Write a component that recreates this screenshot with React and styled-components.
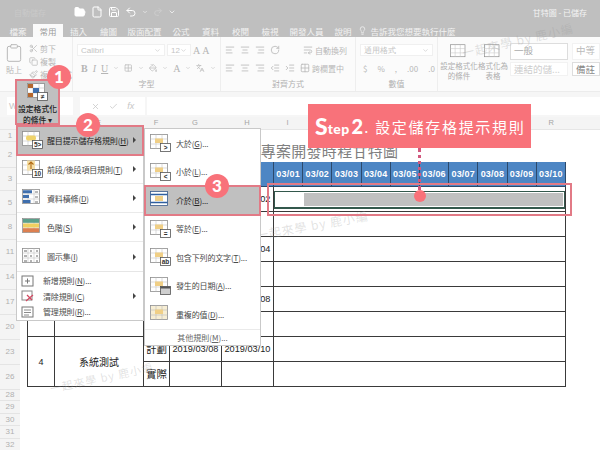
import React from 'react';
import styled, { createGlobalStyle } from 'styled-components';
import {
  FolderOpen, File, Save, Undo2, Redo2, ChevronDown, Scissors, Copy, Paintbrush, Clipboard,
  Grid2x2, PaintBucket, AlignLeft, AlignCenter, AlignRight, IndentDecrease, IndentIncrease,
  WrapText, Lightbulb, Check, X, RotateCw, Languages,
} from 'lucide-react';

const cjk = '"Noto Sans CJK TC", "Liberation Sans", sans-serif';
const pink = '#f8727a';
const frame = '#e27a86';

const GlobalStyle = createGlobalStyle`
  html, body { margin: 0; padding: 0; background: #fff; }
  body { font-family: ${cjk}; }
`;

const Page = styled.div`
  position: relative;
  width: 600px;
  height: 450px;
  overflow: hidden;
  display: flex;
  flex-direction: column;
  background: #fff;
`;

/* title bar + tabs */
const TitleBar = styled.div`
  flex: none;
  height: 24px;
  background: #bfbfbf;
  display: flex;
  align-items: center;
  padding: 0 13px 0 14px;
  color: #f4f4f4;
  font-size: 8px;
`;
const AutoSave = styled.span`
  width: 60px;
  color: #c9c9c9;
`;
const QuickIcons = styled.div`
  display: flex;
  align-items: center;
  gap: 5px;
  color: #fff;
  flex: 1;
`;
const TabBar = styled.div`
  flex: none;
  height: 13px;
  background: #bfbfbf;
  display: flex;
  align-items: stretch;
  padding-left: 3px;
`;
const Tab = styled.div`
  width: ${(p) => p.$w || 30}px;
  flex: none;
  display: flex;
  align-items: center;
  justify-content: center;
  gap: 3px;
  font-size: 8.5px;
  white-space: nowrap;
  color: ${(p) => (p.$active ? '#9a9a9a' : '#f3f3f3')};
  background: ${(p) => (p.$active ? '#fafafa' : 'transparent')};
`;

/* ribbon */
const Ribbon = styled.div`
  flex: none;
  height: 55px;
  box-sizing: border-box;
  background: #fbfbfb;
  display: flex;
  border-bottom: 1px solid #ececec;
`;
const Group = styled.div`
  width: ${(p) => p.$w}px;
  flex: none;
  display: flex;
  flex-direction: column;
  border-right: ${(p) => (p.$open ? 'none' : '1px solid #eeeeee')};
  padding: 6px 4px 0;
  box-sizing: border-box;
  color: #b8b8b8;
  font-size: 8px;
`;
const GroupBody = styled.div`
  flex: 1;
  display: flex;
  flex-direction: column;
  gap: 4px;
`;
const GroupLabel = styled.div`
  height: 13px;
  line-height: 12px;
  text-align: center;
  font-size: 8px;
  color: #b0b0b0;
`;
const ToolRow = styled.div`
  display: flex;
  align-items: center;
  gap: ${(p) => p.$gap || 5}px;
  height: 14px;
  padding-left: ${(p) => p.$pad || 0}px;
  white-space: nowrap;
`;
const Field = styled.div`
  width: ${(p) => p.$w}px;
  height: 12px;
  background: #fff;
  border: 1px solid #f0f0f0;
  display: flex;
  align-items: center;
  justify-content: space-between;
  padding: 0 3px;
  box-sizing: border-box;
  font-family: "Liberation Sans", sans-serif;
  font-size: 8px;
  color: #c4c4c4;
`;
const Letter = styled.span`
  font-family: "Liberation Serif", serif;
  font-size: 10px;
  font-weight: ${(p) => (p.$bold ? 700 : 400)};
  font-style: ${(p) => (p.$italic ? 'italic' : 'normal')};
  text-decoration: ${(p) => (p.$under ? 'underline' : 'none')};
  color: #b5b5b5;
`;
const Caret = styled(ChevronDown).attrs({ size: 6 })`
  flex: none;
  color: #bbb;
`;
const WrapLabel = styled.span`
  margin-left: -3px;
`;
const Clip = styled.div`
  display: flex;
  gap: 5px;
`;
const Paste = styled.div`
  width: 24px;
  display: flex;
  flex-direction: column;
  align-items: center;
  gap: 1px;
`;
const ClipList = styled.div`
  display: flex;
  flex-direction: column;
  gap: 3px;
`;
const ClipItem = styled.div`
  display: flex;
  align-items: center;
  gap: 2px;
  height: 10px;
  white-space: nowrap;
`;
const StyleRow = styled.div`
  display: flex;
  align-items: flex-start;
`;
const StyleButton = styled.div`
  width: 34px;
  flex: none;
  display: flex;
  flex-direction: column;
  align-items: center;
  text-align: center;
  font-size: 7.5px;
  line-height: 9.5px;
  color: #aeaeae;
  white-space: nowrap;
`;
const StyleGrid = styled.div`
  display: grid;
  grid-template-columns: 58px 28px;
  gap: 2px 4px;
`;
const StyleCell = styled.div`
  height: ${(p) => (p.$tall ? 15 : 12)}px;
  background: #fff;
  border: 1px solid ${(p) => (p.$edge ? '#ddd' : '#f2f2f2')};
  padding-left: 3px;
  font-size: 9.5px;
  line-height: 12px;
  color: ${(p) => p.$color || '#bbb'};
  overflow: hidden;
  white-space: nowrap;
`;

/* formula bar */
const FormulaBar = styled.div`
  flex: none;
  height: 25px;
  background: #f6f6f6;
  display: flex;
  align-items: flex-start;
  padding: 5px 0 0 7px;
  gap: 2px;
  box-sizing: border-box;
  font-family: "Liberation Sans", sans-serif;
  color: #c6c6c6;
  font-size: 9px;
`;
const NameBox = styled.div`
  width: 66px;
  height: 18px;
  background: #fff;
  line-height: 18px;
  padding-left: 2px;
  box-sizing: border-box;
  margin-right: 5px;
`;
const FormulaTools = styled.div`
  width: 65px;
  height: 18px;
  background: #fff;
  display: flex;
  align-items: center;
  justify-content: space-around;
  padding: 0 6px;
  box-sizing: border-box;
`;
const FormulaInput = styled.div`
  flex: 1;
  height: 18px;
  background: #fff;
`;

/* sheet */
const ColumnHead = styled.div`
  flex: none;
  height: 13px;
  background: #f4f4f4;
  border-bottom: 1px solid #e6e6e6;
  box-sizing: border-box;
  display: flex;
  padding-left: 27px;
`;
const ColumnLetter = styled.div`
  width: ${(p) => p.$w}px;
  flex: none;
  text-align: center;
  font-family: "Liberation Sans", sans-serif;
  font-size: 7.5px;
  line-height: 12px;
  color: #a5a5a5;
`;
const SheetBody = styled.div`
  flex: 1;
  min-height: 0;
  overflow: hidden;
  display: flex;
`;
const RowHead = styled.div`
  width: 20px;
  flex: none;
  background: #f4f4f4;
  display: flex;
  flex-direction: column;
`;
const RowNumber = styled.div`
  height: ${(p) => p.$h}px;
  line-height: ${(p) => p.$h - 1}px;
  flex: none;
  text-align: center;
  font-family: "Liberation Sans", sans-serif;
  font-size: 8px;
  color: #b0b0b0;
  border-bottom: 1px solid #e4e4e4;
  box-sizing: border-box;
`;
const Sheet = styled.div`
  margin-left: 7px;
  padding-top: 10px;
`;
const Table = styled.table`
  width: 539px;
  table-layout: fixed;
  border-collapse: collapse;
  color: #222;
`;
const TitleCell = styled.td`
  height: 22px;
  padding: 0 0 0 66px;
  text-align: center;
  font-size: 15px;
  line-height: 20px;
  letter-spacing: 0.3px;
  color: #808080;
`;
const HeadCell = styled.th`
  height: 24px;
  padding: 0;
  background: #4d86c4;
  border: 1px solid #2c4a6c;
  border-top: 0;
  color: #fff;
  font-family: "Liberation Sans", sans-serif;
  font-weight: 700;
  font-size: 9px;
  letter-spacing: 0.2px;
`;
const Cell = styled.td`
  height: 24px;
  padding: 0;
  border: 1px solid #3a3a3a;
  text-align: center;
  font-size: ${(p) => p.$size || 10}px;
  line-height: 12px;
  font-family: ${(p) => (p.$date ? '"Liberation Sans", sans-serif' : cjk)};
  white-space: nowrap;
  overflow: hidden;
`;
const Selection = styled.div`
  height: 18px;
  margin: 3px 0 2px;
  display: flex;
  border: 1px solid #33584c;
  border-bottom-width: 2px;
  padding: 1px;
  box-sizing: border-box;
`;
const SelectionFill = styled.div`
  flex: 1;
  margin-left: 28px;
  background: #c0c0c0;
`;

/* dropdown menus */
const Menu = styled.div`
  position: absolute;
  left: ${(p) => p.$left}px;
  top: ${(p) => p.$top}px;
  width: ${(p) => p.$w}px;
  height: ${(p) => p.$h}px;
  background: #fff;
  border: 1px solid #c9c9c9;
  box-sizing: border-box;
  color: #4a4a4a;
`;
const MenuItem = styled.div`
  height: ${(p) => p.$h || 29}px;
  display: flex;
  align-items: center;
  gap: ${(p) => p.$gap || 4}px;
  padding-left: ${(p) => p.$pad || 5}px;
  box-sizing: border-box;
  font-size: 8px;
  letter-spacing: -0.15px;
  white-space: nowrap;
  position: relative;
  background: ${(p) => (p.$active ? '#c0c0c0' : 'transparent')};
  outline: ${(p) => (p.$active ? `2px solid ${frame}` : 'none')};
  outline-offset: -1px;
  color: ${(p) => (p.$active ? '#222' : 'inherit')};
  border-bottom: ${(p) => (p.$line ? '1px solid #eaeaea' : '0')};
`;
const MenuArrow = styled.span`
  position: absolute;
  right: 7px;
  top: 50%;
  margin-top: -3px;
  border-left: 3.5px solid #444;
  border-top: 3px solid transparent;
  border-bottom: 3px solid transparent;
`;
const MenuDivider = styled.div`
  border-top: 1px solid #e6e6e6;
  padding-top: 1px;
`;
const MenuFoot = styled.div`
  height: 17px;
  border-top: 1px solid #eaeaea;
  font-size: 8px;
  line-height: 16px;
  text-align: center;
  color: #666;
`;

/* annotations */
const CondButton = styled.div`
  position: absolute;
  left: 15px;
  top: 79px;
  width: 45px;
  height: 46px;
  background: #c0c0c0;
  border: 2px solid ${frame};
  box-sizing: border-box;
  display: flex;
  flex-direction: column;
  align-items: center;
  gap: 2px;
  padding-top: 2px;
  font-size: 7.8px;
  line-height: 11px;
  font-weight: 500;
  color: #222;
  text-align: center;
  white-space: nowrap;
`;
const Badge = styled.div`
  position: absolute;
  left: ${(p) => p.$x - 12}px;
  top: ${(p) => p.$y - 12}px;
  width: 24px;
  height: 24px;
  border-radius: 50%;
  background: ${pink};
  color: #fff;
  font-family: "Lato", sans-serif;
  font-weight: 900;
  font-size: 17px;
  line-height: 24px;
  text-align: center;
`;
const Callout = styled.div`
  position: absolute;
  left: 308px;
  top: 104px;
  width: 223px;
  height: 44px;
  background: ${pink};
  color: #fff;
  display: flex;
  align-items: center;
  padding-left: 7px;
  box-sizing: border-box;
  font-family: "Lato", sans-serif;
  font-weight: 900;
  white-space: nowrap;
`;
const StepCap = styled.span`
  font-size: 23px;
  line-height: 1;
`;
const StepWord = styled.span`
  font-size: 14px;
  margin-top: 5px;
  letter-spacing: 0.4px;
`;
const StepNum = styled.span`
  font-size: 20px;
  line-height: 1;
  margin-left: 2px;
`;
const StepText = styled.span`
  font-family: ${cjk};
  font-weight: 400;
  font-size: 15px;
  letter-spacing: 1.7px;
  margin-left: 1px;
`;
const Dots = styled.div`
  position: absolute;
  left: 418px;
  top: 148px;
  height: 42px;
  border-left: 3px dotted #d2587e;
`;
const Dot = styled.div`
  position: absolute;
  left: 414px;
  top: 190px;
  width: 12px;
  height: 12px;
  border-radius: 50%;
  background: ${pink};
`;
const RowFrame = styled.div`
  position: absolute;
  left: 267px;
  top: 183px;
  width: 305px;
  height: 33px;
  border: 2px solid ${frame};
  box-sizing: border-box;
`;
const Watermark = styled.div`
  position: absolute;
  left: ${(p) => p.$x}px;
  top: ${(p) => p.$y}px;
  transform: rotate(${(p) => p.$r}deg);
  transform-origin: left center;
  font-size: ${(p) => p.$size}px;
  color: rgba(150, 150, 150, 0.28);
  white-space: nowrap;
  letter-spacing: 1px;
`;

/* sheet-shaped drawings used as menu icons */
const Amber = '#f0cf86';
function SheetIcon({ children, w = 21, h = 18 }) {
  return (
    <svg width={w} height={h} viewBox="0 0 21 18" style={{ flex: 'none' }}>
      <rect x="0.5" y="0.5" width="17" height="14" fill="#fff" stroke="#8d8d8d" strokeWidth="0.8" />
      <path d="M0.5 5h17M0.5 10h17M6 0.5v14M12 0.5v14" stroke="#c4c4c4" strokeWidth="0.6" />
      {children}
    </svg>
  );
}
function SmallBox({ label }) {
  return (
    <>
      <rect x="10.5" y="9.5" width="10" height="8" fill="#fff" stroke="#555" strokeWidth="0.8" />
      <text x="15.5" y="16" fontSize="6.5" textAnchor="middle" fontFamily="Liberation Sans" fontWeight="700" fill="#333">{label}</text>
    </>
  );
}
const Block = () => <rect x="5" y="4.5" width="8" height="4.5" fill={Amber} />;
const Dashes = ({ color = '#666' }) => (
  <path d="M2 3h3M2 8h3M2 13h3M8 3h2M8 8h2M8 13h2M14 3h2M14 8h2M14 13h2" stroke={color} strokeWidth="1" />
);

const mainRules = [
  {
    text: '醒目提示儲存格規則', key: 'H', more: true, active: true,
    icon: <SheetIcon><rect x="4" y="4.5" width="10" height="5" rx="2" fill="#efd36c" /><SmallBox label="5>" /></SheetIcon>,
  },
  {
    text: '前段/後段項目規則', key: 'T', more: true,
    icon: (
      <SheetIcon>
        <rect x="5" y="0.5" width="8" height="10" fill="#f5dfa6" />
        <path d="M9 9V2M6.5 4.5 9 2l2.5 2.5" stroke="#b26a12" strokeWidth="1.1" fill="none" />
        <SmallBox label="10" />
      </SheetIcon>
    ),
  },
  {
    text: '資料橫條', key: 'D', more: true,
    icon: <SheetIcon><path d="M1 2.8h9M1 7.6h6M1 12.4h7.5" stroke="#3f6fae" strokeWidth="3" /><path d="M13 3h3M13 8h3M13 13h3" stroke="#777" strokeWidth="1" /></SheetIcon>,
  },
  {
    text: '色階', key: 'S', more: true,
    icon: (
      <SheetIcon>
        <rect x="1" y="1" width="16" height="3.8" fill="#5ca08a" />
        <rect x="1" y="5.5" width="16" height="4" fill="#f0d060" />
        <rect x="1" y="10.2" width="16" height="4" fill="#dd8050" />
      </SheetIcon>
    ),
  },
  { text: '圖示集', key: 'I', more: true, icon: <SheetIcon><Dashes /></SheetIcon> },
];

const smallRules = [
  {
    text: '新增規則', key: 'N', tail: '...',
    icon: <svg width="13" height="12" viewBox="0 0 13 12"><rect x="1" y="1" width="11" height="10" fill="#fff" stroke="#777" /><path d="M4 6h5M6.5 3.5v5" stroke="#777" /></svg>,
  },
  {
    text: '清除規則', key: 'C', more: true,
    icon: <svg width="13" height="12" viewBox="0 0 13 12"><rect x="1" y="1" width="10" height="9" fill="#fff" stroke="#888" /><path d="M5 11l7-6M6 5l5 5" stroke="#d2475f" strokeWidth="1.2" /></svg>,
  },
  {
    text: '管理規則', key: 'R', tail: '...',
    icon: <svg width="13" height="12" viewBox="0 0 13 12"><rect x="1" y="1" width="11" height="10" fill="#fff" stroke="#777" /><path d="M3 4h7M3 6.5h7M3 9h5" stroke="#8a8a8a" /></svg>,
  },
];

const blueBetween = (
  <SheetIcon>
    <rect x="0.5" y="0.5" width="17" height="14" fill="#fff" stroke="#3d5f8f" strokeWidth="0.8" />
    <path d="M0.5 3.5h17M0.5 11.5h17" stroke="#2f5f9f" strokeWidth="1.5" />
    <rect x="5" y="5" width="8" height="5" fill={Amber} />
  </SheetIcon>
);

const highlightRules = [
  { text: '大於', key: 'G', icon: <SheetIcon><Block /><SmallBox label=">" /></SheetIcon> },
  { text: '小於', key: 'L', icon: <SheetIcon><Block /><SmallBox label="<" /></SheetIcon> },
  { text: '介於', key: 'B', active: true, icon: blueBetween },
  { text: '等於', key: 'E', icon: <SheetIcon><Block /><SmallBox label="=" /></SheetIcon> },
  { text: '包含下列的文字', key: 'T', icon: <SheetIcon><Block /><SmallBox label="ab" /></SheetIcon> },
  {
    text: '發生的日期', key: 'A',
    icon: <SheetIcon><Block /><rect x="10.5" y="9.5" width="10" height="8" fill="#cfcfcf" stroke="#555" strokeWidth="0.8" /><rect x="10.5" y="9.5" width="10" height="2" fill="#555" /></SheetIcon>,
  },
  { text: '重複的值', key: 'D', icon: <SheetIcon><rect x="1" y="1" width="16" height="13" fill="#f7eed4" /><path d="M1 5h16M1 10h16M6 1v13M12 1v13" stroke="#bbb" strokeWidth="0.6" /><Block /></SheetIcon> },
];

const tabs = [
  ['檔案', 30], ['常用', 30, true], ['插入', 31], ['繪圖', 29], ['版面配置', 43], ['公式', 30], ['資料', 29],
  ['校閱', 31], ['檢視', 28], ['開發人員', 45], ['說明', 28],
];

const columnLetters = [
  ['D', 27], ['E', 89], ['F', 26], ['G', 52], ['H', 52], ['I', 29.3], ['J', 29.3], ['K', 29.3], ['L', 29.3],
  ['M', 29.3], ['N', 29.3], ['O', 29.3], ['P', 29.3], ['Q', 29.3], ['R', 29.3],
];

const rowNumbers = [
  ['1', 12], ['2', 26], ['3', 23], ['5', 24], ['8', 25], ['11', 25], ['14', 25], ['17', 25], ['20', 25], ['23', 25],
  ['26', 25], ['28', 11], ['29', 12.5], ['30', 12.5], ['31', 12.5], ['32', 12.5],
];

const dates = ['03/01', '03/02', '03/03', '03/04', '03/05', '03/06', '03/07', '03/08', '03/09', '03/10'];

const tasks = [
  { no: 1, name: '需求訪談', start: '2019/03/01', end: '2019/03/02' },
  { no: 2, name: '系統分析', start: '2019/03/02', end: '2019/03/04' },
  { no: 3, name: '程式開發', start: '2019/03/04', end: '2019/03/08' },
  { no: 4, name: '系統測試', start: '2019/03/08', end: '2019/03/10' },
];

const KeyHint = ({ k, tail }) => (
  <>
    (<u>{k}</u>){tail}
  </>
);

function RibbonTools() {
  const c = '#b9b9b9';
  return (
    <Ribbon>
      <Group $w={73}>
        <GroupBody>
          <Clip>
            <Paste>
              <Clipboard size={20} color={c} strokeWidth={1.2} />
              <span>貼上</span>
            </Paste>
            <ClipList>
              <ClipItem><Scissors size={9} color={c} />剪下</ClipItem>
              <ClipItem><Copy size={9} color={c} />複製</ClipItem>
              <ClipItem><Paintbrush size={9} color={c} />複製格式</ClipItem>
            </ClipList>
          </Clip>
        </GroupBody>
      </Group>
      <Group $w={148}>
        <GroupBody>
          <ToolRow $gap={2}>
            <Field $w={88}>Calibri<ChevronDown size={7} /></Field>
            <Field $w={24}>12<ChevronDown size={7} /></Field>
            <Letter>A</Letter><Letter>A</Letter>
          </ToolRow>
          <ToolRow $pad={4}>
            <Letter $bold>B</Letter>
            <Letter $italic>I</Letter>
            <Letter $under>U</Letter>
            <Caret />
            <Grid2x2 size={10} color={c} />
            <Caret />
            <PaintBucket size={10} color={c} />
            <Caret />
            <Letter>A</Letter>
            <Caret />
            <Languages size={10} color={c} />
            <Caret />
          </ToolRow>
        </GroupBody>
        <GroupLabel>字型</GroupLabel>
      </Group>
      <Group $w={135}>
        <GroupBody>
          <ToolRow>
            <AlignLeft size={10} color={c} />
            <AlignCenter size={10} color={c} />
            <AlignRight size={10} color={c} />
            <RotateCw size={10} color={c} />
            <WrapText size={10} color={c} style={{ marginLeft: 18 }} />
            <WrapLabel>自動換列</WrapLabel>
          </ToolRow>
          <ToolRow>
            <AlignLeft size={10} color={c} />
            <AlignCenter size={10} color={c} />
            <AlignRight size={10} color={c} />
            <IndentDecrease size={10} color={c} />
            <IndentIncrease size={10} color={c} />
            <Grid2x2 size={10} color={c} />
            <WrapLabel>跨欄置中</WrapLabel>
          </ToolRow>
        </GroupBody>
        <GroupLabel>對齊方式</GroupLabel>
      </Group>
      <Group $w={82}>
        <GroupBody>
          <ToolRow><Field $w={74}>通用格式<ChevronDown size={7} /></Field></ToolRow>
          <ToolRow $gap={10} $pad={3}>
            <span>$</span><span>%</span><span>,</span><span>.00</span><span>.0</span>
          </ToolRow>
        </GroupBody>
        <GroupLabel>數值</GroupLabel>
      </Group>
      <Group $w={162} $open>
        <StyleRow>
          <StyleButton>
            <SheetIcon w={18} h={18} />
            設定格式化<br />的條件
          </StyleButton>
          <StyleButton>
            <SheetIcon w={18} h={18} />
            格式化為<br />表格
          </StyleButton>
          <StyleGrid>
            <StyleCell $tall $edge $color="#aaa">一般</StyleCell>
            <StyleCell $tall>中等</StyleCell>
            <StyleCell $color="#ccc">連結的儲...</StyleCell>
            <StyleCell $edge $color="#888">備註</StyleCell>
          </StyleGrid>
        </StyleRow>
      </Group>
    </Ribbon>
  );
}

export default function App() {
  return (
    <Page>
      <GlobalStyle />
      <TitleBar>
        <AutoSave>自動儲存</AutoSave>
        <QuickIcons>
          <FolderOpen size={12} fill="#fff" />
          <File size={12} />
          <Save size={12} />
          <Undo2 size={12} />
          <ChevronDown size={6} />
          <Redo2 size={10} color="#cfcfcf" />
          <ChevronDown size={8} />
        </QuickIcons>
        <span>甘特圖 - 已儲存</span>
      </TitleBar>
      <TabBar>
        {tabs.map(([label, w, active]) => (
          <Tab key={label} $w={w} $active={active}>{label}</Tab>
        ))}
        <Tab $w={100}><Lightbulb size={9} />告訴我您想要執行什麼</Tab>
      </TabBar>
      <RibbonTools />
      <FormulaBar>
        <NameBox>W</NameBox>
        <FormulaTools>
          <X size={9} /><Check size={9} /><i>fx</i>
        </FormulaTools>
        <FormulaInput />
      </FormulaBar>
      <ColumnHead>
        {columnLetters.map(([letter, w]) => (
          <ColumnLetter key={letter} $w={w}>{letter}</ColumnLetter>
        ))}
      </ColumnHead>
      <SheetBody>
        <RowHead>
          {rowNumbers.map(([n, h]) => (
            <RowNumber key={n} $h={h}>{n}</RowNumber>
          ))}
        </RowHead>
        <Sheet>
          <Table>
            <colgroup>
              <col style={{ width: 27 }} />
              <col style={{ width: 89 }} />
              <col style={{ width: 26 }} />
              <col style={{ width: 52 }} />
              <col style={{ width: 52 }} />
              {dates.map((d) => <col key={d} />)}
            </colgroup>
            <tbody>
              <tr><TitleCell colSpan={15}>專案開發時程甘特圖</TitleCell></tr>
              <tr>
                <HeadCell>項次</HeadCell>
                <HeadCell>工作項目</HeadCell>
                <HeadCell>階段</HeadCell>
                <HeadCell>開始</HeadCell>
                <HeadCell>結束</HeadCell>
                {dates.map((d) => <HeadCell key={d}>{d}</HeadCell>)}
              </tr>
              {tasks.map((t, i) => (
                <React.Fragment key={t.no}>
                  <tr>
                    <Cell rowSpan={2} $date $size={9}>{t.no}</Cell>
                    <Cell rowSpan={2}>{t.name}</Cell>
                    <Cell $size={10.5}>計劃</Cell>
                    <Cell $date $size={9.2}>{t.start}</Cell>
                    <Cell $date $size={9.2}>{t.end}</Cell>
                    <Cell colSpan={10}>
                      {i === 0 && <Selection><SelectionFill /></Selection>}
                    </Cell>
                  </tr>
                  <tr>
                    <Cell $size={10.5}>實際</Cell>
                    <Cell />
                    <Cell />
                    <Cell colSpan={10} />
                  </tr>
                </React.Fragment>
              ))}
            </tbody>
          </Table>
        </Sheet>
      </SheetBody>

      <Watermark $x={462} $y={44} $size={12} $r={-13}>一起來學 by 鹿小編</Watermark>
      <Watermark $x={256} $y={226} $size={12} $r={-10}>一起來學 by 鹿小編</Watermark>
      <Watermark $x={50} $y={380} $size={11} $r={-12}>一起來學 by 鹿小編</Watermark>

      <CondButton>
        <SheetIcon>
          <rect x="1" y="1" width="5" height="4" fill="#b5672e" />
          <rect x="6" y="5" width="6" height="5" fill="#3f6fae" />
          <rect x="1" y="10" width="5" height="4" fill="#b5672e" />
          <SmallBox label="≠" />
        </SheetIcon>
        <span>設定格式化<br />的條件 ▾</span>
      </CondButton>

      <Menu $left={16} $top={125} $w={128} $h={196}>
        {mainRules.map((r) => (
          <MenuItem key={r.key} $active={r.active} $line={r.key !== 'I'}>
            {r.icon}
            <span>{r.text}<KeyHint k={r.key} /></span>
            {r.more && <MenuArrow />}
          </MenuItem>
        ))}
        <MenuDivider>
          {smallRules.map((r) => (
            <MenuItem key={r.key} $h={15.5} $pad={4} $gap={9}>
              {r.icon}
              <span>{r.text}<KeyHint k={r.key} tail={r.tail} /></span>
              {r.more && <MenuArrow />}
            </MenuItem>
          ))}
        </MenuDivider>
      </Menu>

      <Menu $left={144} $top={128} $w={117} $h={218}>
        {highlightRules.map((r) => (
          <MenuItem key={r.text} $h={28.5} $active={r.active} $gap={5}>
            {r.icon}
            <span>{r.text}<KeyHint k={r.key} tail="..." /></span>
          </MenuItem>
        ))}
        <MenuFoot>其他規則<KeyHint k="M" tail="..." /></MenuFoot>
      </Menu>

      <RowFrame />
      <Dots />
      <Dot />
      <Callout>
        <StepCap>S</StepCap>
        <StepWord>tep</StepWord>
        <StepNum>2</StepNum>
        <StepText>. 設定儲存格提示規則</StepText>
      </Callout>
      <Badge $x={59} $y={77}>1</Badge>
      <Badge $x={88} $y={125}>2</Badge>
      <Badge $x={217} $y={186}>3</Badge>
    </Page>
  );
}
